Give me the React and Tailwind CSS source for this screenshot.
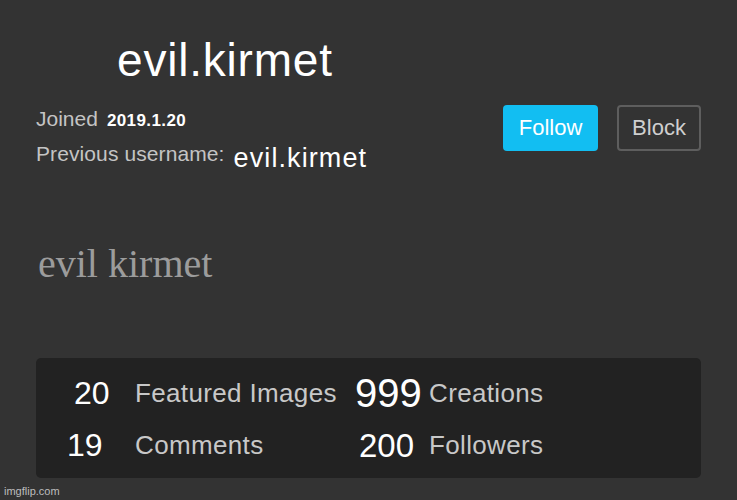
export default function App() {
  const sans = { fontFamily: '"Liberation Sans", Arial, sans-serif' };
  return (
    <div
      className="w-[737px] h-[500px] bg-[#333333] flex flex-col overflow-hidden"
      style={sans}
    >
      <div className="pl-[117px] pt-[37px] text-[46px] leading-none text-white tracking-[0.8px]">
        evil.kirmet
      </div>

      <div className="mt-[22px] flex items-start justify-between pl-[36px] pr-[36px]">
        <div className="flex flex-col pt-[3px]">
          <div className="flex items-baseline leading-none">
            <span className="text-[21px] text-[#c4c4c4]">Joined</span>
            <span className="ml-[9px] text-[17px] font-bold text-white tracking-[0.4px]">2019.1.20</span>
          </div>
          <div className="mt-[14px] flex items-start leading-none">
            <span className="text-[21px] text-[#c4c4c4] tracking-[0.1px]">Previous username:</span>
            <span className="ml-[9px] mt-[2px] text-[27px] text-white tracking-[1.1px]">
              evil.kirmet
            </span>
          </div>
        </div>
        <div className="flex items-start gap-[19px]">
          <button className="w-[95px] h-[46px] rounded-[4px] bg-[#12bef2] text-white text-[22px] leading-none flex items-center justify-center">
            Follow
          </button>
          <button className="w-[84px] h-[46px] rounded-[4px] border-2 border-[#5e5e5e] bg-[#333333] text-[#cfcfcf] text-[22px] leading-none flex items-center justify-center">
            Block
          </button>
        </div>
      </div>

      <div
        className="mt-[72px] pl-[38px] text-[40px] leading-none text-[#9c9c9c]"
        style={{ fontFamily: '"Liberation Serif", "Times New Roman", serif' }}
      >
        evil kirmet
      </div>

      <div className="mt-[74px] mx-[36px] h-[120px] rounded-[5px] bg-[#222222] pt-[9px] pb-[7px] flex flex-col">
        <div className="h-[52px] flex items-center leading-none">
          <span className="ml-[38px] w-[61px] text-[32px] text-white">20</span>
          <span className="w-[220px] text-[26px] text-[#c8c8c8] tracking-[0.35px]">
            Featured Images
          </span>
          <span className="w-[74px] text-[40px] text-white">999</span>
          <span className="text-[26px] text-[#c8c8c8] tracking-[0.35px]">Creations</span>
        </div>
        <div className="h-[52px] flex items-center leading-none">
          <span className="ml-[31px] w-[68px] text-[32px] text-white">19</span>
          <span className="w-[224px] text-[26px] text-[#c8c8c8] tracking-[0.35px]">
            Comments
          </span>
          <span className="w-[70px] text-[33px] text-white">200</span>
          <span className="text-[26px] text-[#c8c8c8] tracking-[0.35px]">Followers</span>
        </div>
      </div>

      <div className="mt-[8px] pl-[4px] text-[11px] leading-none text-[#bdbdbd]">
        imgflip.com
      </div>
    </div>
  );
}
